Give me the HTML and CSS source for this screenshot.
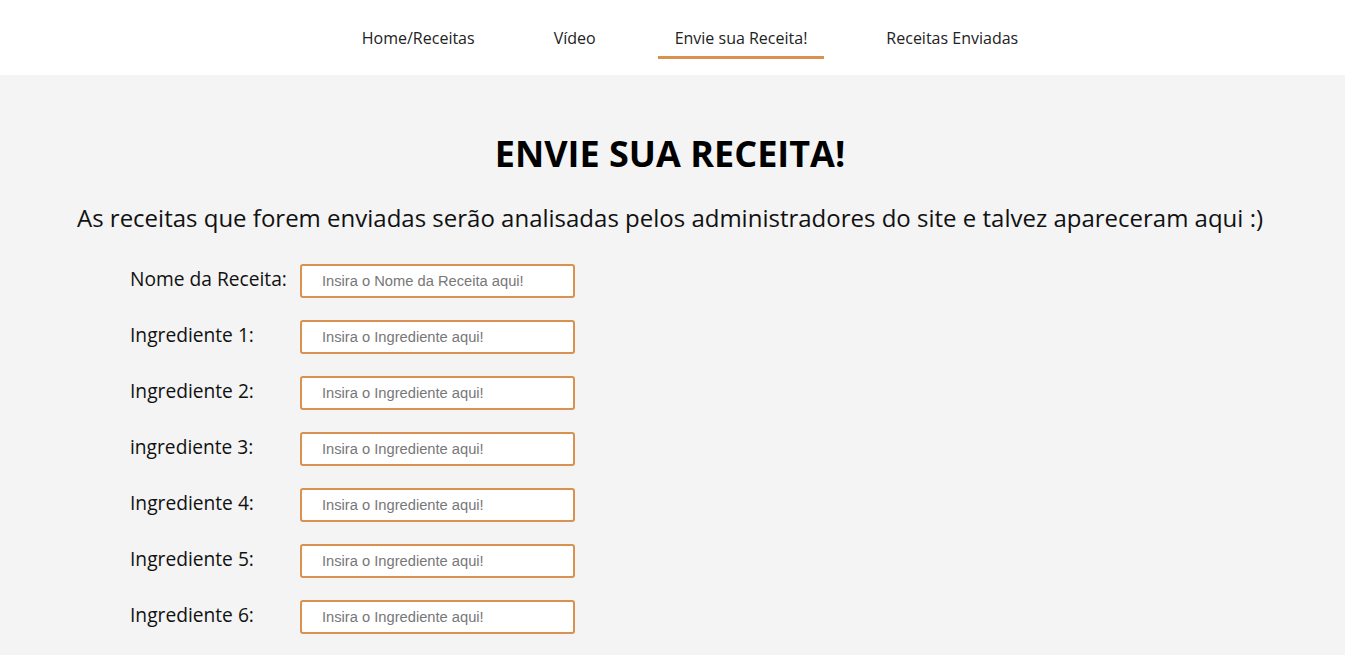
FILE: index.html
```html
<!DOCTYPE html>
<html lang="pt-BR">
<head>
<meta charset="utf-8">
<title>Envie sua Receita!</title>
<link rel="stylesheet" href="styles.css">
</head>
<body>
<header class="topbar">
  <nav class="nav">
    <a class="nav-link" href="#">Home/Receitas</a>
    <a class="nav-link" href="#">Vídeo</a>
    <a class="nav-link active" href="#">Envie sua Receita!</a>
    <a class="nav-link" href="#">Receitas Enviadas</a>
  </nav>
</header>
<main class="content">
  <h1 class="title">ENVIE SUA RECEITA!</h1>
  <p class="subtitle">As receitas que forem enviadas serão analisadas pelos administradores do site e talvez apareceram aqui :)</p>
  <form class="form">
    <div class="row"><label class="label">Nome da Receita:</label><input class="field" type="text" placeholder="Insira o Nome da Receita aqui!"></div>
    <div class="row"><label class="label">Ingrediente 1:</label><input class="field" type="text" placeholder="Insira o Ingrediente aqui!"></div>
    <div class="row"><label class="label">Ingrediente 2:</label><input class="field" type="text" placeholder="Insira o Ingrediente aqui!"></div>
    <div class="row"><label class="label">ingrediente 3:</label><input class="field" type="text" placeholder="Insira o Ingrediente aqui!"></div>
    <div class="row"><label class="label">Ingrediente 4:</label><input class="field" type="text" placeholder="Insira o Ingrediente aqui!"></div>
    <div class="row"><label class="label">Ingrediente 5:</label><input class="field" type="text" placeholder="Insira o Ingrediente aqui!"></div>
    <div class="row"><label class="label">Ingrediente 6:</label><input class="field" type="text" placeholder="Insira o Ingrediente aqui!"></div>
  </form>
</main>
</body>
</html>
```
FILE: styles.css
```css
html, body {
  margin: 0;
  padding: 0;
  background: #f4f4f4;
  font-family: "Open Sans", sans-serif;
  color: #111;
}
.topbar {
  background: #fff;
  height: 75px;
  display: flex;
  justify-content: center;
}
.nav {
  display: flex;
  gap: 45px;
  padding-left: 35px;
}
.nav-link {
  display: block;
  padding: 27px 17px 0;
  height: 29px;
  font-size: 16px;
  line-height: 22px;
  color: #222;
  text-decoration: none;
  border-bottom: 3px solid transparent;
  box-sizing: content-box;
}
.nav-link.active {
  border-bottom-color: #d9914f;
}
.content {
  padding-top: 54px;
  padding-right: 5px;
}
.title {
  margin: 0;
  text-align: center;
  font-size: 36px;
  font-weight: 700;
  line-height: 49px;
  color: #000;
}
.subtitle {
  margin: 23px 0 0;
  text-align: center;
  font-size: 24px;
  line-height: 33px;
  color: #111;
}
.form {
  margin-top: 30px;
  padding-left: 130px;
  display: flex;
  flex-direction: column;
  gap: 22px;
}
.row {
  display: flex;
  align-items: center;
  height: 34px;
}
.label {
  width: 170px;
  font-size: 19.2px;
  line-height: 26px;
  margin-top: -4px;
  color: #111;
}
.field {
  box-sizing: border-box;
  width: 275px;
  height: 34px;
  border: 2px solid #d9914f;
  border-radius: 3px;
  background: #fff;
  padding: 0 0 0 20px;
  font-family: "Liberation Sans", Arial, sans-serif;
  font-size: 14.7px;
  outline: none;
}
.field::placeholder {
  color: #777;
}
```
